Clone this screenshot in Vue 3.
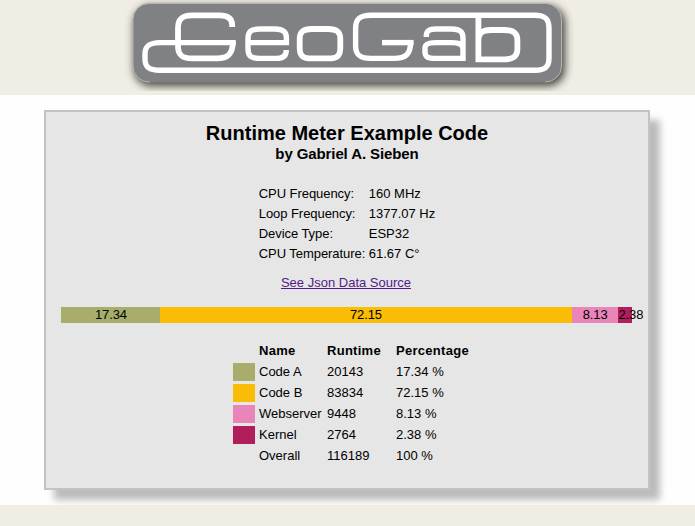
<script setup>
const info = [
  ['CPU Frequency:', '160 MHz'],
  ['Loop Frequency:', '1377.07 Hz'],
  ['Device Type:', 'ESP32'],
  ['CPU Temperature:', '61.67 C°'],
]
const tasks = [
  { name: 'Code A', runtime: 20143, pct: '17.34', color: '#a8ad6b' },
  { name: 'Code B', runtime: 83834, pct: '72.15', color: '#fabd05' },
  { name: 'Webserver', runtime: 9448, pct: '8.13', color: '#ea85b9' },
  { name: 'Kernel', runtime: 2764, pct: '2.38', color: '#b21e5b' },
]
</script>

<template>
  <div class="page">
    <header class="header">
      <svg class="logo" width="461" height="91" viewBox="117 0 461 91" role="img" aria-label="GeoGab">
        <defs>
          <filter id="soft" x="-10%" y="-30%" width="120%" height="160%">
            <feGaussianBlur stdDeviation="4" />
          </filter>
        </defs>
        <rect x="134" y="6" width="431" height="80" rx="17" fill="#3c3a30" opacity=".95" filter="url(#soft)" />
        <rect x="133" y="3.5" width="428.5" height="78.5" rx="16" fill="#808184" stroke="#b5b5b3" />
        <path d="M150 82H545" stroke="#5f5f5e" />
        <g fill="none" stroke="#fff" stroke-width="5.8">
          <path d="M232.2 27V25C232.2 18 227 15.3 220 15.3H192C182 15.3 178 19 178 28V46C178 55 182 58.4 192 58.4H217C228 58.4 232.6 54 232.8 42.6" />
          <path d="M235.8 42.6H160C149 42.6 145 46 145 54V59C145 67 149 70.2 160 70.2H535C545 70.2 549 67 549 58V28C549 19 545 15.3 535 15.3H371C360 15.3 355.6 19 355.6 28V46C355.6 55 360 58.4 371 58.4H394C406 58.4 410.4 54 410.6 42.6" stroke-width="5.4" />
          <path d="M413.6 42.6H382" stroke-width="5.4" />
          <path d="M286.2 50V51C286.2 56 283 58.4 276 58.4H260C251 58.4 248 56 248 49V39C248 31.5 251 29 260 29H275C283 29 286.4 32 286.4 38V42.6H248" stroke-width="5.4" />
          <path d="M312 29H328C337 29 340.3 32 340.3 39V48C340.3 56 337 58.4 328 58.4H312C303 58.4 299.7 56 299.7 48V39C299.7 32 303 29 312 29Z" />
          <path d="M426.3 37V36C426.3 31 429 29 436 29H452C460 29 463 32 463 38V61M463 49C463 44.5 459 42.6 452 42.6H436C428 42.6 425 44 425 48V52C425 57 428 58.4 436 58.4H463" stroke-width="5.4" />
          <path d="M478.4 15V59.3M478.4 43V41C478.4 33 482 30 491 30H504C513 30 517.4 33 517.4 40V49C517.4 56 514 59.3 504 59.3H475.5" />
        </g>
      </svg>
    </header>

    <main class="main">
      <section class="card">
        <h1>Runtime Meter Example Code</h1>
        <h2>by Gabriel A. Sieben</h2>
        <div class="info">
          <template v-for="[label, value] in info" :key="label">
            <span>{{ label }}</span><span>{{ value }}</span>
          </template>
        </div>
        <a class="link" href="#">See Json Data Source</a>
        <div class="bar">
          <div v-for="t in tasks" :key="t.name" class="segment" :style="{ width: t.pct + '%', background: t.color }">{{ t.pct }}</div>
        </div>
        <div class="legend">
          <i></i><b>Name</b><b>Runtime</b><b>Percentage</b>
          <template v-for="t in tasks" :key="t.name">
            <i :style="{ background: t.color }"></i>
            <span>{{ t.name }}</span><span>{{ t.runtime }}</span><span>{{ t.pct }} %</span>
          </template>
          <i></i><span>Overall</span><span>116189</span><span>100 %</span>
        </div>
      </section>
    </main>
  </div>
</template>

<style>
body {
  margin: 0;
  background: #f0ede5;
}
</style>

<style scoped>
.page {
  height: 526px;
  overflow: hidden;
  background: #f0ede5;
  font-family: "Liberation Sans", Arial, sans-serif;
  font-size: 13px;
  color: #000;
}
.header {
  display: flex;
  box-sizing: border-box;
  padding-left: 117px;
  height: 95px;
}
.logo {
  display: block;
}
.main {
  box-sizing: border-box;
  height: 410px;
  padding: 15px 45px 0 44px;
  background: #fefefe;
  overflow: hidden;
}
.card {
  box-sizing: border-box;
  display: flex;
  flex-direction: column;
  align-items: center;
  height: 380px;
  padding: 9px 15px 0;
  background: #e6e6e6;
  border: 2px solid #c3c3c3;
  box-shadow: 10px 10px 7px #bcbcbc;
}
h1, h2 {
  margin: 0;
  font-weight: bold;
}
h1 {
  font-size: 20px;
  line-height: 24px;
}
h2 {
  font-size: 15px;
  line-height: 18px;
  letter-spacing: -0.1px;
}
.info {
  display: grid;
  grid-template-columns: 110px auto;
  margin-top: 21px;
  line-height: 20px;
}
.info span:nth-child(odd) {
  letter-spacing: -0.06px;
}
.link {
  margin-top: 9px;
  margin-right: 2px;
  line-height: 20px;
  color: #551a8b;
}
.bar {
  display: flex;
  align-self: flex-start;
  width: 571px;
  height: 16px;
  margin-top: 14px;
}
.segment {
  display: flex;
  justify-content: center;
  line-height: 16px;
  letter-spacing: -0.1px;
}
.segment:first-child {
  text-indent: 1px;
}
.segment:last-child {
  justify-content: flex-start;
}
.legend {
  display: grid;
  grid-template-columns: 22px 64px 65px 74px;
  column-gap: 4px;
  margin: 17px 0 0 9px;
  line-height: 21px;
}
.legend b {
  letter-spacing: 0.28px;
}
.legend i {
  height: 18px;
  margin-top: 2px;
}
</style>
